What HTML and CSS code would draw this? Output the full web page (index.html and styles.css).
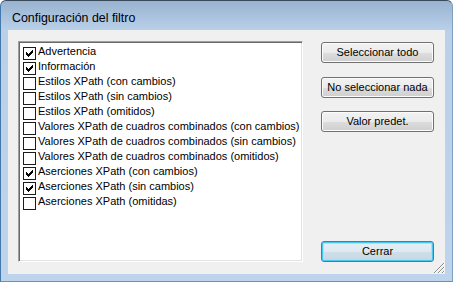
FILE: index.html
```html
<!DOCTYPE html>
<html lang="es">
<head>
<meta charset="utf-8">
<title>Configuración del filtro</title>
<link rel="stylesheet" href="styles.css">
</head>
<body>
<div class="window">
  <div class="titlebar">Configuración del filtro</div>
  <div class="client">
    <div class="list">
      <div class="row"><span class="box"><svg width="11" height="11" viewBox="1 1 11 11" shape-rendering="crispEdges"><path d="M9 3h1v1h-1zM8 4h2v1h-2zM3 5h1v1h-1zM7 5h3v1h-3zM3 6h2v1h-2zM6 6h3v1h-3zM3 7h5v1h-5zM4 8h3v1h-3zM5 9h1v1h-1z" fill="#000"/></svg></span>Advertencia</div>
      <div class="row"><span class="box"><svg width="11" height="11" viewBox="1 1 11 11" shape-rendering="crispEdges"><path d="M9 3h1v1h-1zM8 4h2v1h-2zM3 5h1v1h-1zM7 5h3v1h-3zM3 6h2v1h-2zM6 6h3v1h-3zM3 7h5v1h-5zM4 8h3v1h-3zM5 9h1v1h-1z" fill="#000"/></svg></span>Información</div>
      <div class="row"><span class="box"></span>Estilos XPath (con cambios)</div>
      <div class="row"><span class="box"></span>Estilos XPath (sin cambios)</div>
      <div class="row"><span class="box"></span>Estilos XPath (omitidos)</div>
      <div class="row"><span class="box"></span>Valores XPath de cuadros combinados (con cambios)</div>
      <div class="row"><span class="box"></span>Valores XPath de cuadros combinados (sin cambios)</div>
      <div class="row"><span class="box"></span>Valores XPath de cuadros combinados (omitidos)</div>
      <div class="row"><span class="box"><svg width="11" height="11" viewBox="1 1 11 11" shape-rendering="crispEdges"><path d="M9 3h1v1h-1zM8 4h2v1h-2zM3 5h1v1h-1zM7 5h3v1h-3zM3 6h2v1h-2zM6 6h3v1h-3zM3 7h5v1h-5zM4 8h3v1h-3zM5 9h1v1h-1z" fill="#000"/></svg></span>Aserciones XPath (con cambios)</div>
      <div class="row"><span class="box"><svg width="11" height="11" viewBox="1 1 11 11" shape-rendering="crispEdges"><path d="M9 3h1v1h-1zM8 4h2v1h-2zM3 5h1v1h-1zM7 5h3v1h-3zM3 6h2v1h-2zM6 6h3v1h-3zM3 7h5v1h-5zM4 8h3v1h-3zM5 9h1v1h-1z" fill="#000"/></svg></span>Aserciones XPath (sin cambios)</div>
      <div class="row"><span class="box"></span>Aserciones XPath (omitidas)</div>
    </div>
    <div class="buttons">
      <button class="btn btn-first">Seleccionar todo</button>
      <button class="btn btn-second">No seleccionar nada</button>
      <button class="btn">Valor predet.</button>
      <button class="btn btn-default">Cerrar</button>
    </div>
    <svg class="grip" width="12" height="12" viewBox="0 0 12 12" shape-rendering="crispEdges">
      <path d="M10 1h1v1h-1zM9 2h1v1h-1zM8 3h1v1h-1zM7 4h1v1h-1zM6 5h1v1h-1zM5 6h1v1h-1zM4 7h1v1h-1zM3 8h1v1h-1zM2 9h1v1h-1zM1 10h1v1h-1z
               M10 5h1v1h-1zM9 6h1v1h-1zM8 7h1v1h-1zM7 8h1v1h-1zM6 9h1v1h-1zM5 10h1v1h-1z
               M10 9h1v1h-1zM9 10h1v1h-1z" fill="#8a8a8a"/>
      <path d="M11 1h1v1h-1zM10 2h1v1h-1zM9 3h1v1h-1zM8 4h1v1h-1zM7 5h1v1h-1zM6 6h1v1h-1zM5 7h1v1h-1zM4 8h1v1h-1zM3 9h1v1h-1zM2 10h1v1h-1z
               M11 5h1v1h-1zM10 6h1v1h-1zM9 7h1v1h-1zM8 8h1v1h-1zM7 9h1v1h-1zM6 10h1v1h-1z
               M11 9h1v1h-1zM10 10h1v1h-1z" fill="#ffffff"/>
    </svg>
  </div>
</div>
</body>
</html>
```

FILE: styles.css
```css
html, body {
  margin: 0;
  padding: 0;
  background: #ffffff;
}

.window {
  width: 453px;
  height: 282px;
  box-sizing: border-box;
  display: flex;
  flex-direction: column;
  padding: 0 7px 7px 7px;
  border: 1px solid #3b4a5a;
  border-left-color: #4477aa;
  border-bottom-color: #1eb2d8;
  border-right-color: #7f9fbf;
  border-radius: 6px 6px 0 0;
  background: linear-gradient(to bottom, #98b3d0 0, #b9d0e9 29px, #bdd4ec 100%);
}

.titlebar {
  height: 29px;
  flex: none;
  padding-left: 4px;
  font-family: "Liberation Sans", Arial, sans-serif;
  font-size: 12.4px;
  line-height: 34px;
  color: #000000;
  white-space: nowrap;
}

.client {
  position: relative;
  flex: 1;
  display: flex;
  padding: 11px 11px 12px 10px;
  background: #f0f0f0;
}

.list {
  width: 285px;
  height: 221px;
  box-sizing: border-box;
  flex: none;
  padding: 2px 0 0 4px;
  background: #ffffff;
  border-top: 1px solid #a0a0a0;
  border-left: 1px solid #a0a0a0;
  border-bottom: 1px solid #ffffff;
  border-right: 1px solid #ffffff;
  box-shadow: inset 1px 1px 0 #696969, inset -1px -1px 0 #e3e3e3;
  font-family: "Liberation Sans", Arial, sans-serif;
  font-size: 11px;
  color: #000000;
}

.row {
  height: 15px;
  line-height: 15px;
  display: flex;
  align-items: flex-start;
  white-space: nowrap;
}

.box {
  width: 13px;
  height: 13px;
  box-sizing: border-box;
  flex: none;
  margin: 3px 2px 0 0;
  border: 1px solid #1c1c1c;
  background: #ffffff;
  display: flex;
}

.box svg {
  display: block;
}

.buttons {
  width: 113px;
  margin-left: 18px;
  display: flex;
  flex-direction: column;
  padding-top: 1px;
}

.btn {
  height: 21px;
  width: 113px;
  box-sizing: border-box;
  margin: 0;
  padding: 0;
  border: 1px solid #707070;
  border-radius: 3px;
  background: linear-gradient(to bottom, #f2f2f2 0%, #ebebeb 50%, #dddddd 51%, #cfcfcf 100%);
  box-shadow: inset 0 0 0 1px #fcfcfc;
  font-family: "Liberation Sans", Arial, sans-serif;
  font-size: 11px;
  color: #000000;
  line-height: 19px;
  text-align: center;
}

.btn-first {
  margin-bottom: 14px;
}

.btn-second {
  margin-bottom: 13px;
}

.btn-default {
  margin-top: auto;
  border-color: #3c7fb1;
  background: linear-gradient(to bottom, #e6eff5 0%, #dde9f1 50%, #cfdfe9 51%, #c6d8e4 100%);
  box-shadow: inset 0 0 0 1px #4ac8f2, inset 0 0 0 2px #a8e2f7;
}

.grip {
  position: absolute;
  right: 0;
  bottom: 0;
}
```
